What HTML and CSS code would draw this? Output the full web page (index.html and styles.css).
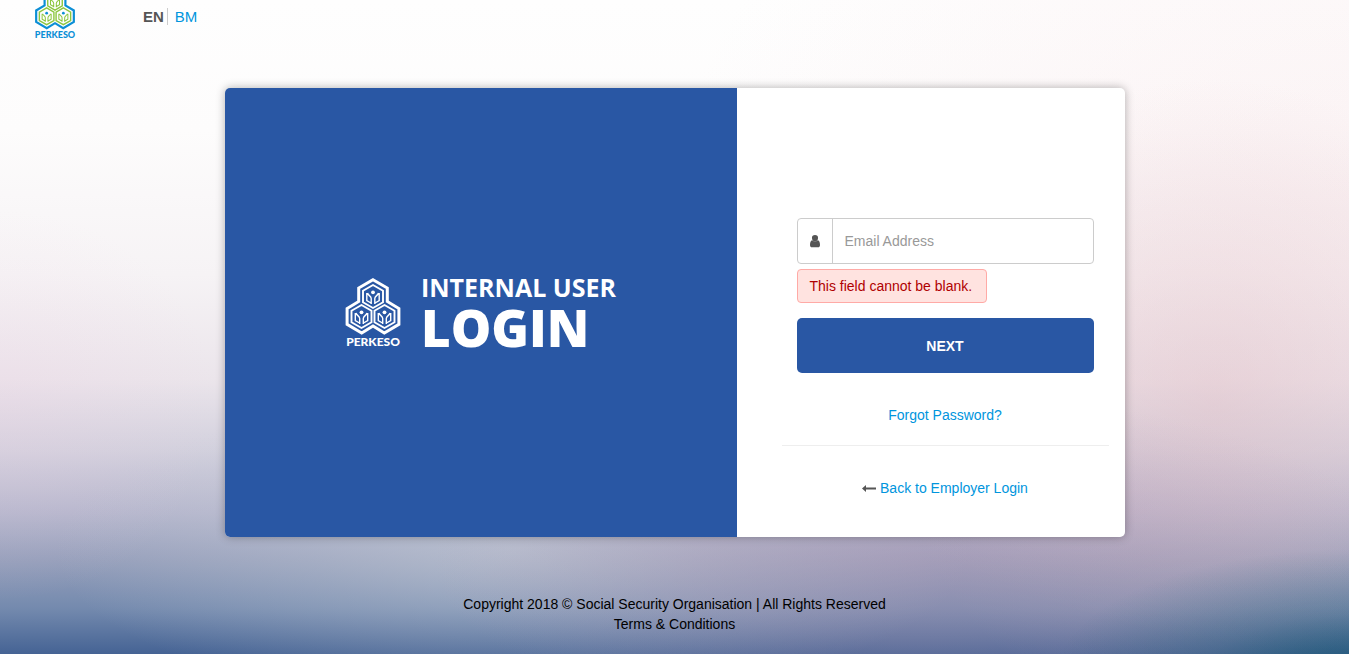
FILE: index.html
```html
<!DOCTYPE html>
<html lang="en">
<head>
  <meta charset="utf-8">
  <meta name="viewport" content="width=device-width, initial-scale=1">
  <title>PERKESO | Internal User Login</title>
  <link rel="stylesheet" href="styles.css">
</head>
<body>
  <svg class="symbols" aria-hidden="true">
    <symbol id="figure" viewBox="-11 -12 22 24" overflow="visible">
      <path class="cell" d="M0-11.500 10-5.800V5.800L0 11.500-10 5.800V-5.800Z"/>
      <path class="person" d="M-5.500-3.500C-5-1-1.800-.5-1.800 2V7.500M5.500-3.500C5-1 1.800-.5 1.800 2V7.500M-6.200-3.500V4L-2 6.500M6.200-3.500V4L2 6.500"/>
      <circle class="head" cx="0" cy="-4.2" r="1.9"/>
    </symbol>
    <symbol id="mark" viewBox="0 0 55 57">
      <path class="outline" d="M27.5 1.700 41.800 10V23.500L53.400 30.500V46.300L38.800 55 27.500 48 16.200 55 1.600 46.300V30.500L13.200 23.500V10Z"/>
      <use href="#figure" x="16.5" y="6.5" width="22" height="24"/>
      <use href="#figure" x="5" y="26.5" width="22" height="24"/>
      <use href="#figure" x="28" y="26.5" width="22" height="24"/>
    </symbol>
  </svg>

  <header class="topbar">
    <a class="logo logo-small" href="#">
      <svg class="mark" aria-hidden="true"><use href="#mark"/></svg>
      <span>PERKESO</span>
    </a>
    <nav class="languages" aria-label="Language">
      <strong>EN</strong>
      <a href="#">BM</a>
    </nav>
  </header>

  <main class="card">
    <section class="brand">
      <div class="logo logo-large">
        <svg class="mark" aria-hidden="true"><use href="#mark"/></svg>
        <span>PERKESO</span>
      </div>
      <h1 class="title"><span>INTERNAL USER</span><strong>LOGIN</strong></h1>
    </section>

    <section class="panel">
      <form class="login" novalidate>
        <div class="field">
          <label for="email" aria-label="Email Address">
            <svg width="10" height="13" viewBox="0 0 10 13" aria-hidden="true"><path d="M5 0a3 3 0 0 1 3 3.200C8 5 6.700 6.600 5 6.600S2 5 2 3.200A3 3 0 0 1 5 0ZM2.200 5.300C3.700 7.200 6.300 7.200 7.800 5.300 9.500 5.500 10 8 10 10c0 1.400-.8 2.300-2 2.300H2C.8 12.300 0 11.400 0 10 0 8 .5 5.500 2.200 5.300Z"/></svg>
          </label>
          <input id="email" type="email" placeholder="Email Address" aria-describedby="email-error">
        </div>
        <p class="error" id="email-error">This field cannot be blank.</p>
        <button class="next" type="button">NEXT</button>
      </form>
      <p class="link-row"><a href="#">Forgot Password?</a></p>
      <hr>
      <p class="link-row back">
        <svg width="14" height="8" viewBox="0 0 14 8" aria-hidden="true"><path d="M0 3.500 4 0V2.500H14V4.500H4V7Z"/></svg>
        <a href="#">Back to Employer Login</a>
      </p>
    </section>
  </main>

  <footer class="footer">
    <p>Copyright 2018 © Social Security Organisation | All Rights Reserved</p>
    <a href="#">Terms &amp; Conditions</a>
  </footer>
</body>
</html>
```
FILE: styles.css
```css
* {
  box-sizing: border-box;
}

body {
  display: flex;
  flex-direction: column;
  min-height: 100vh;
  margin: 0;
  color: #555;
  font: 14px/20px "Liberation Sans", Arial, sans-serif;
  background:
    radial-gradient(ellipse 22% 20% at 100% 104%, rgba(12, 84, 110, 0.7), rgba(12, 84, 110, 0.25) 50%, transparent),
    radial-gradient(ellipse 36% 26% at 68% 86%, rgba(184, 152, 180, 0.38), rgba(184, 152, 180, 0.25) 45%, transparent),
    radial-gradient(ellipse 34% 24% at 38% 84%, rgba(200, 206, 216, 0.6), rgba(200, 206, 216, 0.3) 45%, transparent),
    radial-gradient(ellipse 24% 50% at 90% 62%, rgba(222, 182, 190, 0.4), rgba(222, 182, 190, 0.22) 45%, transparent),
    radial-gradient(ellipse 16% 30% at 0% 62%, rgba(236, 206, 226, 0.25), rgba(236, 206, 226, 0.12) 50%, transparent),
    radial-gradient(ellipse 50% 70% at 100% 30%, rgba(246, 220, 224, 0.3), rgba(246, 220, 224, 0.15) 50%, transparent),
    linear-gradient(#fefefe 0%, #fdfcfc 20%, #f6f3f5 42%, #ebe5eb 58%, #d2d0dd 69%, #b6b7cd 78%, #949eba 86%, #748aae 93%, #456394 100%);
}

a {
  color: #0095dd;
  text-decoration: none;
}

p {
  margin: 0;
}

.symbols {
  position: absolute;
  width: 0;
  height: 0;
}

.topbar {
  display: flex;
  gap: 68px;
  height: 88px;
  padding-left: 35px;
  overflow: hidden;
}

.logo {
  display: flex;
  flex-direction: column;
  align-items: center;
  color: #fff;
  font-family: Lato, sans-serif;
  font-weight: 900;
}

.mark {
  display: block;
  flex: none;
  width: 100%;
}

.outline,
.cell,
.person {
  fill: none;
  stroke: currentColor;
}

.outline {
  stroke-width: 3;
}

.cell {
  stroke: var(--cell, currentColor);
  stroke-width: 1.9;
}

.person {
  stroke: var(--cell, currentColor);
  stroke-width: 1.4;
}

.head {
  fill: currentColor;
}

.logo-small {
  --cell: #8cc63f;
  width: 40px;
  margin-top: -12px;
  color: #0c8fd6;
  font-size: 9px;
  line-height: 10px;
}

.logo-small .mark {
  height: 42px;
}

.logo-large {
  width: 56px;
  padding-top: 2px;
  font-size: 12px;
  line-height: 14px;
}

.logo-large .mark {
  height: 57px;
}

.languages {
  display: flex;
  align-items: flex-start;
  padding-top: 8px;
  font-size: 15px;
  line-height: 17px;
}

.languages strong {
  padding-right: 3px;
  border-right: 1px solid #ccc;
}

.languages a {
  padding-left: 7px;
}

.card {
  display: grid;
  grid-template-columns: 512fr 388fr;
  width: 100%;
  max-width: 900px;
  margin: 0 auto;
  overflow: hidden;
  background: #fff;
  border-radius: 5px;
  box-shadow: 0 0 10px rgba(0, 0, 0, 0.3);
}

.brand {
  display: flex;
  align-items: center;
  justify-content: center;
  gap: 20px;
  color: #fff;
  background: #2957a4;
}

.title {
  margin: 0;
  font-family: "Open Sans", sans-serif;
}

.title span,
.title strong {
  display: block;
}

.title span {
  font-size: 25px;
  font-weight: 700;
  line-height: 28px;
}

.title strong {
  font-size: 51px;
  font-weight: 800;
  line-height: 52px;
}

.panel {
  padding: 130px 16px 39px 45px;
}

.login {
  display: flex;
  flex-direction: column;
  align-items: flex-start;
  padding: 0 15px;
}

.field {
  display: flex;
  width: 100%;
  height: 46px;
  border: 1px solid #ccc;
  border-radius: 4px;
}

.field label {
  display: flex;
  flex: none;
  align-items: center;
  justify-content: center;
  width: 35px;
  border-right: 1px solid #ccc;
}

.field input {
  flex: 1;
  min-width: 0;
  padding: 0 12px;
  color: #555;
  font: inherit;
  background: none;
  border: 0;
}

.field input::placeholder {
  color: #999;
}

svg path {
  fill: #555;
}

.error {
  margin: 5px 0 15px;
  padding: 6px 14px 6px 12px;
  color: #b00000;
  background: #ffe3e0;
  border: 1px solid #ffaaa6;
  border-radius: 4px;
}

.next {
  width: 100%;
  height: 55px;
  color: #fff;
  font: inherit;
  font-weight: bold;
  background: #2957a4;
  border: 0;
  border-radius: 5px;
}

.link-row {
  padding: 32px 0 20px;
  text-align: center;
}

.back {
  padding-bottom: 0;
}

hr {
  margin: 0;
  border: 0;
  border-top: 1px solid #eee;
}

.footer {
  padding: 57px 0 20px;
  color: #000;
  text-align: center;
}

.footer a {
  color: inherit;
}
```
